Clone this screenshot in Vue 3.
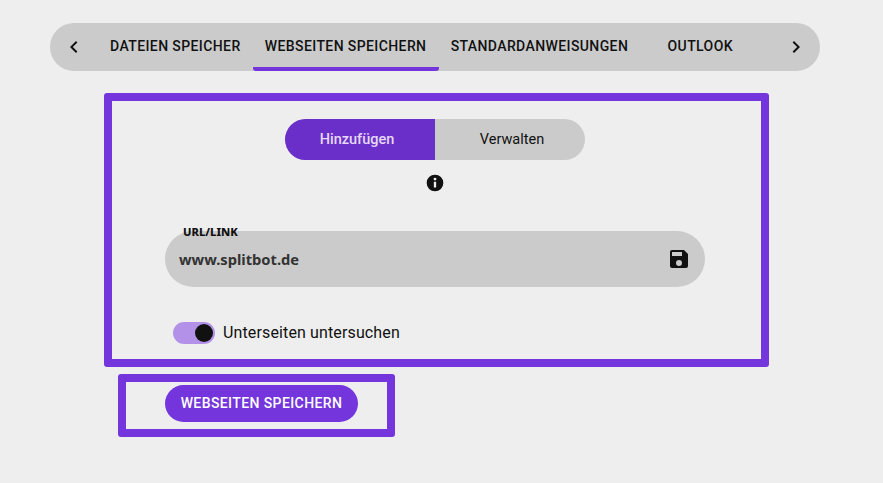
<script setup>
import { ref } from 'vue';

const tabs = ['DATEIEN SPEICHER', 'WEBSEITEN SPEICHERN', 'STANDARDANWEISUNGEN', 'OUTLOOK'];
const active_tab = ref(1);
const mode = ref('add');
const url = ref('www.splitbot.de');
const subpages = ref(true);
</script>

<template>
    <div class="page">
        <div class="tab_bar">
            <button class="tab_arrow">
                <svg width="24" height="24" viewBox="0 0 24 24"><path d="M15.4 7.4 14 6l-6 6 6 6 1.4-1.4-4.6-4.6z" fill="#111" /></svg>
            </button>
            <div class="tab_list">
                <div v-for="(tab, i) in tabs" :key="tab" class="tab" :class="{ tab_active: i == active_tab }" @click="active_tab = i">{{ tab }}</div>
            </div>
            <button class="tab_arrow">
                <svg width="24" height="24" viewBox="0 0 24 24"><path d="M8.6 16.6 10 18l6-6-6-6-1.4 1.4 4.6 4.6z" fill="#111" /></svg>
            </button>
        </div>

        <div class="form_box">
            <div class="mode_switch">
                <div class="mode_btn mode_add" :class="{ mode_active: mode == 'add' }" @click="mode = 'add'">Hinzufügen</div>
                <div class="mode_btn mode_manage" :class="{ mode_active: mode == 'manage' }" @click="mode = 'manage'">Verwalten</div>
            </div>
            <svg class="info_icon" width="20" height="20" viewBox="0 0 24 24">
                <path d="M12 2a10 10 0 1 0 0 20 10 10 0 0 0 0-20zm1.4 15.5h-2.8v-7h2.8zM12 9a1.7 1.7 0 1 1 0-3.4A1.7 1.7 0 0 1 12 9z" fill="#111" />
            </svg>
            <div class="url_field">
                <label class="url_label">URL/LINK</label>
                <input v-model="url" class="url_input" type="text">
                <svg class="save_icon" width="24" height="24" viewBox="0 0 24 24">
                    <path d="M17 3H5a2 2 0 0 0-2 2v14a2 2 0 0 0 2 2h14a2 2 0 0 0 2-2V7zm-5 16a3 3 0 1 1 0-6 3 3 0 0 1 0 6zm3-10H5V5h10z" fill="#111" />
                </svg>
            </div>
            <div class="toggle_row" @click="subpages = !subpages">
                <div class="toggle_track" :class="{ toggle_on: subpages }"><span class="toggle_knob"></span></div>
                <span class="toggle_text">Unterseiten untersuchen</span>
            </div>
        </div>

        <div class="action_box">
            <button class="save_btn">WEBSEITEN SPEICHERN</button>
        </div>
    </div>
</template>

<style>
body {
    background: #eeeeee;
}
</style>

<style scoped>
.page {
    width: 883px;
    height: 483px;
    box-sizing: border-box;
    padding: 23px 0 0 50px;
    background: #eeeeee;
    font-family: Roboto, "Liberation Sans", sans-serif;
    color: #111;
    overflow: hidden;
}

/* Tab bar */
.tab_bar {
    display: flex;
    justify-content: space-between;
    width: 770px;
    height: 48px;
    border-radius: 24px;
    background: #cbcbcb;
    overflow: hidden;
}

.tab_arrow {
    display: flex;
    align-items: center;
    justify-content: center;
    flex: none;
    width: 48px;
    padding: 0;
    border: none;
    background: none;
}

.tab_list {
    display: flex;
    flex: 1;
}

.tab {
    display: flex;
    align-items: center;
    justify-content: center;
    box-sizing: border-box;
    flex: none;
    min-width: 120px;
    height: 48px;
    padding: 0 12px 2px;
    border-bottom: 4px solid transparent;
    border-top: 4px solid transparent;
    font-size: 14px;
    font-weight: 500;
    letter-spacing: 0.4px;
    white-space: nowrap;
}

.tab:nth-child(2) {
    min-width: 186px;
}

.tab_active {
    border-bottom-color: #7535dc;
    border-bottom-left-radius: 3px;
    border-bottom-right-radius: 3px;
}

/* Framed form */
.form_box {
    display: flex;
    flex-direction: column;
    align-items: center;
    box-sizing: border-box;
    width: 665px;
    height: 274px;
    margin: 22px 0 0 54px;
    padding: 18px 3px 0 0;
    border: 8px solid #7535dc;
    border-radius: 3px;
}

.mode_switch {
    display: flex;
    width: 300px;
    height: 41px;
    border-radius: 21px;
    background: #cbcbcb;
    overflow: hidden;
}

.mode_btn {
    display: flex;
    align-items: center;
    justify-content: center;
    box-sizing: border-box;
    width: 150px;
    font-size: 14.5px;
}

.mode_add {
    padding-right: 6px;
}

.mode_manage {
    padding-left: 4px;
}

.mode_active {
    background: #6a2fc9;
    color: #e6d9f7;
    font-weight: 500;
}

.info_icon {
    margin-top: 13px;
}

.url_field {
    position: relative;
    display: flex;
    align-items: center;
    align-self: flex-start;
    width: 540px;
    height: 56px;
    margin: 38px 0 0 53px;
    border-radius: 28px;
    background: #cbcbcb;
}

.url_label {
    position: absolute;
    top: -6px;
    left: 18px;
    font-family: "Noto Sans", sans-serif;
    font-size: 11.2px;
    font-weight: 800;
    line-height: 13px;
}

.url_input {
    flex: 1;
    min-width: 0;
    padding: 0 0 0 14px;
    border: none;
    outline: none;
    background: none;
    color: #333;
    font-family: "Noto Sans", sans-serif;
    font-size: 14.7px;
    font-weight: 700;
}

.save_icon {
    margin-right: 14px;
}

.toggle_row {
    display: flex;
    align-items: center;
    align-self: flex-start;
    gap: 8px;
    margin: 35px 0 0 61px;
}

.toggle_track {
    display: flex;
    align-items: center;
    width: 42px;
    height: 22px;
    border-radius: 11px;
    background: #cbcbcb;
}

.toggle_on {
    justify-content: flex-end;
    background: #b491e8;
}

.toggle_knob {
    width: 18px;
    height: 18px;
    margin-right: 2px;
    border-radius: 50%;
    background: #111;
}

.toggle_text {
    margin-bottom: 2px;
    font-size: 16px;
    letter-spacing: 0.13px;
}

/* Framed action */
.action_box {
    box-sizing: border-box;
    width: 277px;
    height: 63px;
    margin: 7px 0 0 68px;
    padding: 3px 0 0 39px;
    border: 8px solid #7535dc;
    border-radius: 3px;
}

.save_btn {
    width: 193px;
    height: 37px;
    padding: 0 0 2px;
    border: none;
    border-radius: 19px;
    background: #7535dc;
    color: #fff;
    font-family: Roboto, "Liberation Sans", sans-serif;
    font-size: 14px;
    font-weight: 500;
    letter-spacing: 0.4px;
}
</style>
